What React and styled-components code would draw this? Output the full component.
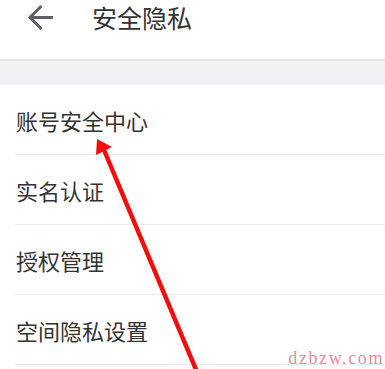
import styled, { createGlobalStyle } from 'styled-components';

const items = ['账号安全中心', '实名认证', '授权管理', '空间隐私设置'];

export default function App() {
  return (
    <Page>
      <GlobalStyle />
      <Header>
        <BackButton aria-label="返回">
          <svg width="27" height="27" viewBox="0 0 27 27" fill="none">
            <path
              d="M26 13.5H3M14.5 2L3 13.5 14.5 25"
              stroke="#5f6063"
              strokeWidth="3"
            />
          </svg>
        </BackButton>
        <Title>安全隐私</Title>
      </Header>
      <Band />
      <List>
        {items.map((label) => (
          <Row key={label}>
            <RowLabel>{label}</RowLabel>
          </Row>
        ))}
      </List>
      <Annotation width="385" height="369" viewBox="0 0 385 369">
        <line x1="104" y1="150" x2="197" y2="372" stroke="#f30d0d" strokeWidth="4.5" />
        <polygon points="97,139 112,147 96,155" fill="#f30d0d" />
      </Annotation>
      <Watermark>dzbzw.com</Watermark>
    </Page>
  );
}

const GlobalStyle = createGlobalStyle`
  html, body {
    margin: 0;
    padding: 0;
    background: #ffffff;
  }
  body {
    font-family: "Noto Sans CJK SC", "Noto Sans", sans-serif;
  }
`;

const Page = styled.div`
  position: relative;
  width: 385px;
  height: 369px;
  overflow: hidden;
  background: #ffffff;
`;

const Header = styled.header`
  display: flex;
  align-items: center;
  height: 35px;
  padding: 0 0 24px 27px;
  gap: 38px;
`;

const BackButton = styled.button`
  display: flex;
  align-items: center;
  justify-content: center;
  padding: 0;
  margin-top: -1px;
  border: none;
  background: none;
`;

const Title = styled.h1`
  margin: 0;
  font-size: 25px;
  font-weight: 400;
  line-height: 35px;
  color: #333333;
`;

const Band = styled.div`
  height: 24px;
  background: #f2f2f4;
  border-top: 2px solid #e6e6e8;
`;

const List = styled.ul`
  margin: 0;
  padding: 0 0 0 15px;
  list-style: none;
`;

const Row = styled.li`
  display: flex;
  align-items: center;
  height: 69px;
  border-bottom: 1px solid #ebebeb;
`;

const RowLabel = styled.span`
  padding-left: 1px;
  font-size: 22px;
  line-height: 1;
  color: #333333;
`;

const Annotation = styled.svg`
  position: absolute;
  left: 0;
  top: 0;
  pointer-events: none;
`;

const Watermark = styled.span`
  position: absolute;
  right: 1px;
  bottom: 1px;
  font-family: "Liberation Serif", serif;
  font-size: 18px;
  letter-spacing: 1.6px;
  line-height: 20px;
  color: #e88b9c;
`;
